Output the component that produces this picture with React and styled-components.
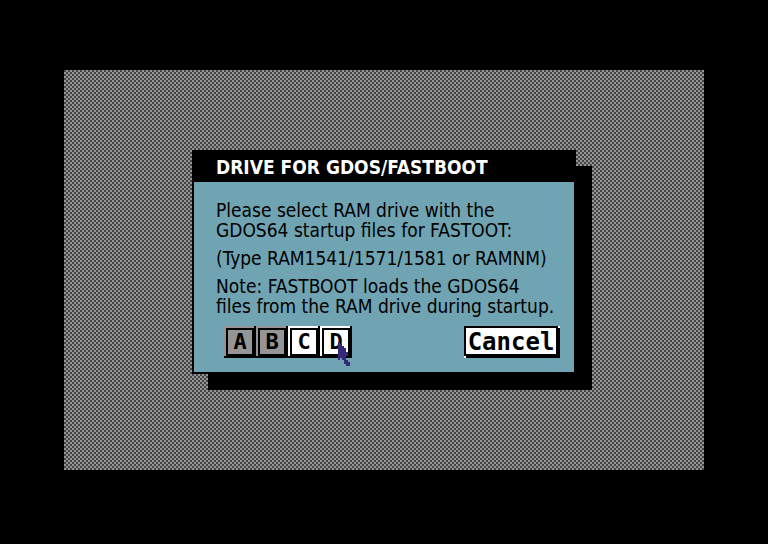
import React from 'react';
import styled, { createGlobalStyle } from 'styled-components';

const GlobalStyle = createGlobalStyle`
  *, *::before, *::after { box-sizing: border-box; }
  body { margin: 0; background: #000; }
`;

const Screen = styled.div`
  display: flex;
  min-height: 100vh;
  padding: 70px 64px 74px;
  background: #000;
`;

const Desktop = styled.main`
  flex: 1;
  display: flex;
  justify-content: center;
  align-items: flex-start;
  padding: 80px 0;
  background: repeating-conic-gradient(#959595 0 25%, #444 0 50%) 0 0 / 4px 4px;
`;

const Dialog = styled.section`
  width: 60%;
  min-width: 384px;
  border: 2px solid #000;
  background: #70a4b2;
  box-shadow: 16px 16px 0 #000;
`;

const TitleBar = styled.h1`
  margin: 0;
  padding: 0 22px;
  background: #000;
  color: #fff;
  font: bold 19px/30px "DejaVu Sans Condensed", "DejaVu Sans", sans-serif;
  white-space: nowrap;
`;

const Message = styled.div`
  display: grid;
  gap: 8px;
  padding: 18px 0 0 22px;
  color: #000;
  font: 19px/20px "DejaVu Sans Condensed", "DejaVu Sans", sans-serif;
  white-space: nowrap;
`;

const Paragraph = styled.p`
  margin: 0;
`;

const Actions = styled.div`
  display: flex;
  justify-content: space-between;
  padding: 10px 14px 14px 30px;
`;

const Drives = styled.div`
  display: flex;
`;

const DriveSlot = styled.div`
  position: relative;
`;

const Button = styled.button`
  display: block;
  height: 32px;
  padding: 0;
  border: 0;
  border-radius: 0;
  color: #000;
  font-family: "DejaVu Sans Mono", monospace;
  font-weight: bold;
  line-height: 32px;
`;

const DriveButton = styled(Button)`
  width: 32px;
  background: ${(p) => p.$face};
  box-shadow:
    inset -2px -2px 0 #000,
    inset 2px 2px 0 ${(p) => p.$face},
    inset 0 0 0 4px #000;
  font-size: 22px;
`;

const CancelButton = styled(Button)`
  width: 96px;
  padding-right: 2px;
  background:
    linear-gradient(#fff, #fff) right top / 2px 2px no-repeat,
    linear-gradient(#fff, #fff) left bottom / 2px 2px no-repeat,
    linear-gradient(#fff, #fff) 2px 2px / calc(100% - 6px) calc(100% - 6px) no-repeat,
    #000;
  font-size: 24px;
`;

const Pointer = styled.svg`
  position: absolute;
  left: 18px;
  top: 16px;
  width: 12px;
  height: 24px;
  pointer-events: none;
`;

const drives = [
  { name: 'A', face: '#959595' },
  { name: 'B', face: '#959595' },
  { name: 'C', face: '#fff' },
  { name: 'D', face: '#fff', pointed: true },
];

function MousePointer() {
  return (
    <Pointer viewBox="0 0 6 12" fill="#352879" shapeRendering="crispEdges" aria-hidden="true">
      <path d="M0 0h1v1h1v1h1v1h1v2h1v2h-1v2h1v1h1v2h-2v-1h-1v-2h-1v-1h-1v1h-1z" />
    </Pointer>
  );
}

export default function App() {
  return (
    <>
      <GlobalStyle />
      <Screen>
        <Desktop>
          <Dialog role="dialog" aria-labelledby="dialog-title">
            <TitleBar id="dialog-title">DRIVE FOR GDOS/FASTBOOT</TitleBar>
            <Message>
              <Paragraph>
                Please select RAM drive with the
                <br />
                GDOS64 startup files for FASTOOT:
              </Paragraph>
              <Paragraph>(Type RAM1541/1571/1581 or RAMNM)</Paragraph>
              <Paragraph>
                Note: FASTBOOT loads the GDOS64
                <br />
                files from the RAM drive during startup.
              </Paragraph>
            </Message>
            <Actions>
              <Drives>
                {drives.map((d) => (
                  <DriveSlot key={d.name}>
                    <DriveButton type="button" $face={d.face}>{d.name}</DriveButton>
                    {d.pointed && <MousePointer />}
                  </DriveSlot>
                ))}
              </Drives>
              <CancelButton type="button">Cancel</CancelButton>
            </Actions>
          </Dialog>
        </Desktop>
      </Screen>
    </>
  );
}
